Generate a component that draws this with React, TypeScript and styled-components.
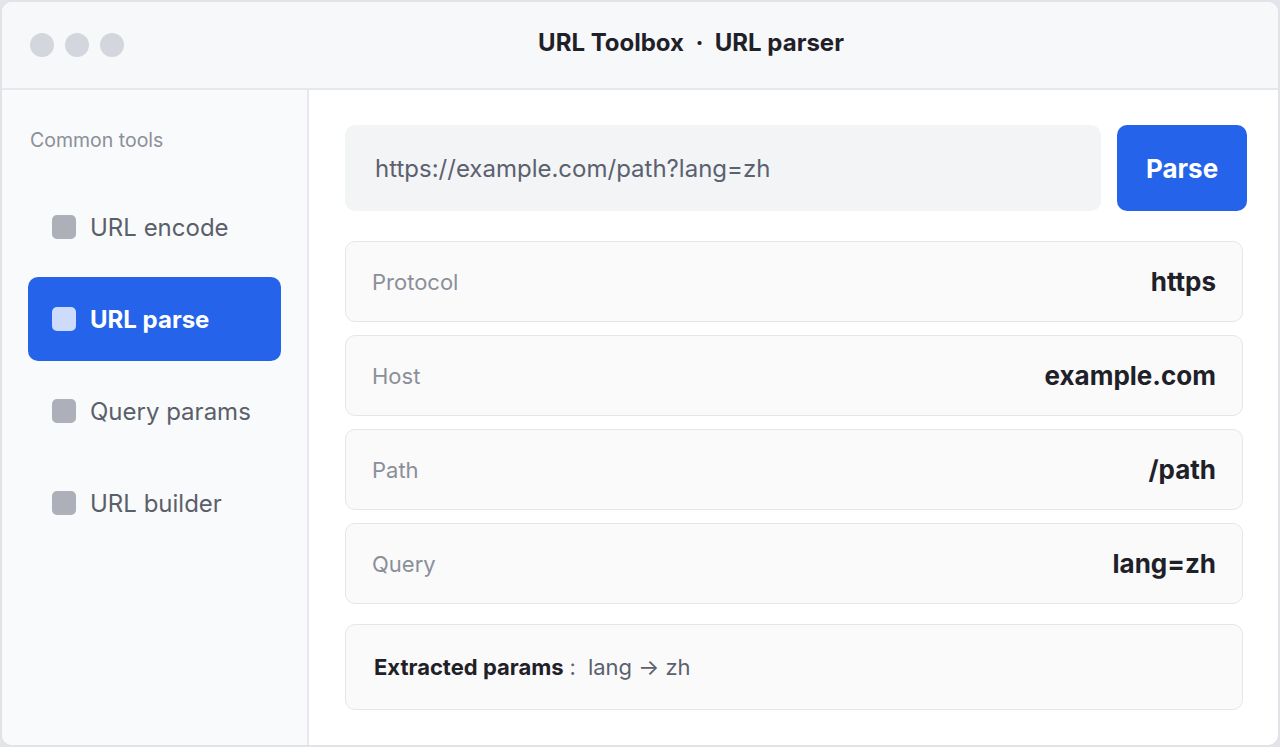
import React from 'react';
import styled, { createGlobalStyle } from 'styled-components';

const GlobalStyle = createGlobalStyle`
  html, body {
    margin: 0;
    padding: 0;
    background: #e4e5ea;
  }
  body {
    font-family: Inter, "Noto Sans", sans-serif;
  }
  * {
    box-sizing: border-box;
  }
`;

const Window = styled.div`
  width: 1280px;
  height: 747px;
  border: 2px solid #e2e3e8;
  border-radius: 12px;
  background: #ffffff;
  display: flex;
  flex-direction: column;
  overflow: hidden;
`;

const TitleBar = styled.header`
  height: 88px;
  flex: none;
  display: flex;
  align-items: center;
  gap: 8px;
  padding: 0 28px;
  background: #f7f8fa;
  border-bottom: 2px solid #e7e8ec;
`;

const Dots = styled.div`
  display: flex;
  gap: 11px;
`;

const Dot = styled.span`
  width: 24px;
  height: 24px;
  border-radius: 50%;
  background: #d4d6dd;
`;

const Title = styled.h1`
  flex: 1;
  margin: 0;
  padding-bottom: 5px;
  text-align: center;
  font-size: 24px;
  font-weight: 700;
  color: #1f2129;
`;

const Body = styled.div`
  flex: 1;
  display: flex;
  min-height: 0;
`;

const Sidebar = styled.nav`
  width: 307px;
  flex: none;
  background: #f9fafb;
  border-right: 2px solid #e7e8ec;
  padding: 38px 26px 0 26px;
  display: flex;
  flex-direction: column;
`;

const SectionLabel = styled.div`
  font-size: 19.5px;
  line-height: 24px;
  color: #8b8f99;
  padding-left: 2px;
  margin-bottom: 33px;
`;

const NavList = styled.div`
  display: flex;
  flex-direction: column;
  gap: 8px;
`;

const NavItem = styled.div<{ $active?: boolean }>`
  height: 84px;
  display: flex;
  align-items: center;
  gap: 14px;
  padding: 0 24px;
  border-radius: 10px;
  font-size: 24px;
  font-weight: ${p => (p.$active ? 700 : 400)};
  color: ${p => (p.$active ? '#ffffff' : '#5b5f6a')};
  background: ${p => (p.$active ? '#2563eb' : 'transparent')};
`;

const NavIcon = styled.span<{ $active?: boolean }>`
  width: 24px;
  height: 24px;
  border-radius: 5px;
  flex: none;
  background: ${p => (p.$active ? '#cddcfc' : '#adb0b9')};
`;

const Main = styled.main`
  flex: 1;
  padding: 35px 31px 0 36px;
  display: flex;
  flex-direction: column;
`;

const InputRow = styled.div`
  display: flex;
  gap: 16px;
  margin-bottom: 30px;
`;

const UrlField = styled.div`
  flex: 1;
  height: 86px;
  display: flex;
  align-items: center;
  padding: 0 30px;
  background: #f3f4f6;
  border-radius: 10px;
  font-size: 24px;
  color: #5b616e;
`;

const ParseButton = styled.button`
  width: 130px;
  height: 86px;
  border: none;
  border-radius: 10px;
  background: #2563eb;
  color: #ffffff;
  font-family: inherit;
  font-size: 26px;
  font-weight: 700;
`;

const Rows = styled.div`
  display: flex;
  flex-direction: column;
  gap: 13px;
  margin-right: 4px;
`;

const FieldRow = styled.div`
  height: 81px;
  display: flex;
  align-items: center;
  justify-content: space-between;
  padding: 0 26px;
  background: #fafafa;
  border: 1px solid #e5e6e9;
  border-radius: 10px;
`;

const FieldLabel = styled.span`
  font-size: 22px;
  color: #8b8f99;
`;

const FieldValue = styled.span`
  font-size: 26px;
  font-weight: 700;
  color: #1f2129;
`;

const ParamsBox = styled.div`
  margin-top: 20px;
  margin-right: 4px;
  height: 86px;
  display: flex;
  align-items: center;
  padding: 0 28px;
  background: #fafafa;
  border: 1px solid #e5e6e9;
  border-radius: 10px;
  font-size: 22px;
  color: #5b616e;
`;

const ParamsLabel = styled.strong`
  font-weight: 700;
  color: #1f2129;
`;

const Sep = styled.span`
  margin: 0 12px 0 6px;
`;

const tools = ['URL encode', 'URL parse', 'Query params', 'URL builder'];

const fields = [
  { label: 'Protocol', value: 'https' },
  { label: 'Host', value: 'example.com' },
  { label: 'Path', value: '/path' },
  { label: 'Query', value: 'lang=zh' }
];

const App = () => (
  <>
    <GlobalStyle />
    <Window>
      <TitleBar>
        <Dots>
          <Dot />
          <Dot />
          <Dot />
        </Dots>
        <Title>URL Toolbox &nbsp;·&nbsp; URL parser</Title>
      </TitleBar>
      <Body>
        <Sidebar>
          <SectionLabel>Common tools</SectionLabel>
          <NavList>
            {tools.map(tool => (
              <NavItem key={tool} $active={tool === 'URL parse'}>
                <NavIcon $active={tool === 'URL parse'} />
                {tool}
              </NavItem>
            ))}
          </NavList>
        </Sidebar>
        <Main>
          <InputRow>
            <UrlField>https://example.com/path?lang=zh</UrlField>
            <ParseButton>Parse</ParseButton>
          </InputRow>
          <Rows>
            {fields.map(f => (
              <FieldRow key={f.label}>
                <FieldLabel>{f.label}</FieldLabel>
                <FieldValue>{f.value}</FieldValue>
              </FieldRow>
            ))}
          </Rows>
          <ParamsBox>
            <ParamsLabel>Extracted params</ParamsLabel>
            <Sep>:</Sep>
            lang → zh
          </ParamsBox>
        </Main>
      </Body>
    </Window>
  </>
);

export default App;
